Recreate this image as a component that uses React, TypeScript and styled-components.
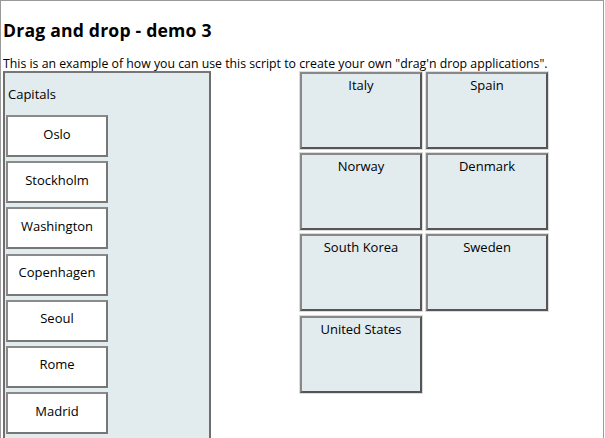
import React from "react";
import styled, { createGlobalStyle } from "styled-components";

const Global = createGlobalStyle`
  html, body { margin: 0; padding: 0; background: #fff; }
  body { font-family: "Open Sans", "DejaVu Sans", sans-serif; color: #000; overflow: hidden; }
`;

const Frame = styled.div`
  box-sizing: border-box;
  width: 604px;
  height: 438px;
  overflow: hidden;
  border: 1px solid #9a9a9a;
  border-bottom: none;
  padding: 0 2px;
`;

const Title = styled.h1`
  margin: 0;
  padding-top: 18px;
  font-size: 17.6px;
  line-height: 22px;
  font-weight: bold;
  letter-spacing: 0.2px;
`;

const Intro = styled.p`
  margin: 15px 0 0;
  font-size: 12.3px;
  line-height: 15px;
`;

const Workspace = styled.div`
  display: flex;
  align-items: flex-start;
  gap: 89px;
`;

const CapitalsPanel = styled.div`
  box-sizing: border-box;
  width: 208px;
  height: 380px;
  background: #e2ebed;
  border: 2px solid #6e6e6e;
  border-top-color: #777;
  padding: 0 0 0 1px;
`;

const PanelLabel = styled.div`
  font-size: 13px;
  line-height: 15px;
  padding: 14px 0 0 2px;
  margin-bottom: 13px;
  font-weight: 500;
`;

const CapitalList = styled.div`
  display: flex;
  flex-direction: column;
  gap: 4.2px;
`;

const Capital = styled.div`
  box-sizing: border-box;
  width: 102px;
  height: 42px;
  flex: none;
  background: #fff;
  border: 2px solid #8a8a8a;
  border-right-color: #777;
  border-bottom-color: #777;
  display: flex;
  align-items: center;
  justify-content: center;
  font-size: 13px;
  font-weight: 500;
  padding-bottom: 5px;
`;

const CountryGrid = styled.div`
  display: grid;
  grid-template-columns: repeat(2, 122px);
  grid-auto-rows: 77px;
  column-gap: 4px;
  row-gap: 4.2px;
  margin-top: 1px;
`;

const Country = styled.div`
  box-sizing: border-box;
  background: #e2ebed;
  border: 2px solid #888;
  border-right-color: #555;
  border-bottom-color: #555;
  box-shadow: 0 0 0 1px #dcdcdc;
  text-align: center;
  font-size: 13px;
  font-weight: 500;
  line-height: 15px;
  padding-top: 4px;
`;

const capitals = ["Oslo", "Stockholm", "Washington", "Copenhagen", "Seoul", "Rome", "Madrid"];
const countries = ["Italy", "Spain", "Norway", "Denmark", "South Korea", "Sweden", "United States"];

export default function App() {
  return (
    <>
      <Global />
      <Frame>
        <Title>Drag and drop - demo 3</Title>
        <Intro>This is an example of how you can use this script to create your own "drag'n drop applications".</Intro>
        <Workspace>
          <CapitalsPanel>
            <PanelLabel>Capitals</PanelLabel>
            <CapitalList>
              {capitals.map((c) => (
                <Capital key={c}>{c}</Capital>
              ))}
            </CapitalList>
          </CapitalsPanel>
          <CountryGrid>
            {countries.map((c) => (
              <Country key={c}>{c}</Country>
            ))}
          </CountryGrid>
        </Workspace>
      </Frame>
    </>
  );
}
